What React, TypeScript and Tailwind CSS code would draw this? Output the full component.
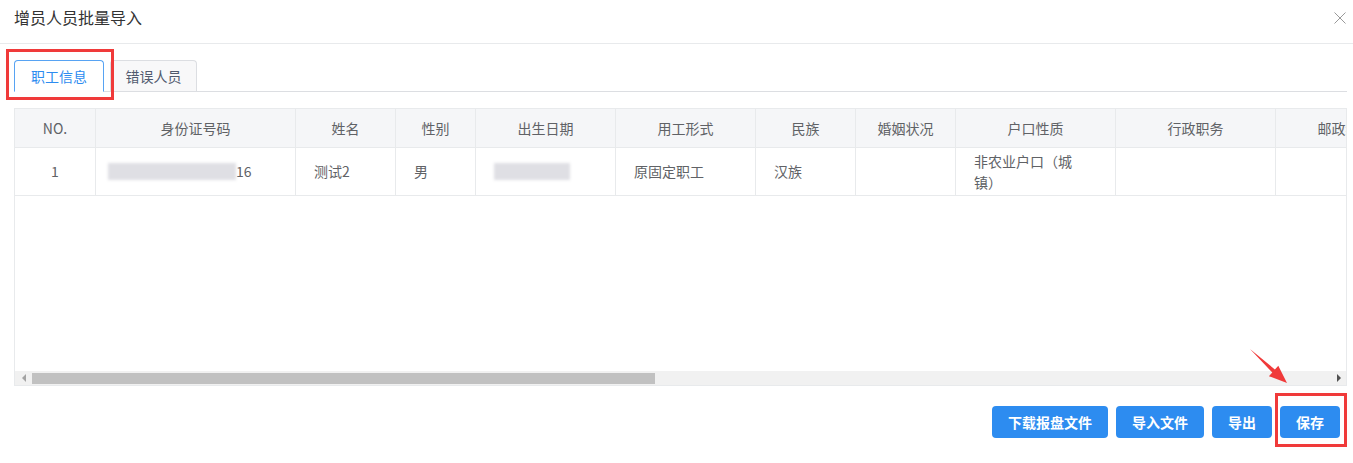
const cols = [
  { key: 'no', title: 'NO.', w: 81 },
  { key: 'idcard', title: '身份证号码', w: 200 },
  { key: 'name', title: '姓名', w: 100 },
  { key: 'sex', title: '性别', w: 80 },
  { key: 'birth', title: '出生日期', w: 140 },
  { key: 'form', title: '用工形式', w: 140 },
  { key: 'nation', title: '民族', w: 100 },
  { key: 'marry', title: '婚姻状况', w: 100 },
  { key: 'hukou', title: '户口性质', w: 160 },
  { key: 'duty', title: '行政职务', w: 160 },
  { key: 'post', title: '邮政编码', w: 140 },
];

function Blur({ w }: { w: number }) {
  return (
    <span
      className="inline-block h-[17px] bg-[#dfdfe4] blur-[1.5px] align-middle"
      style={{ width: w }}
    />
  );
}

function cellContent(key: string) {
  switch (key) {
    case 'no':
      return <div className="w-full text-center">1</div>;
    case 'idcard':
      return (
        <div className="flex items-center ml-[-6px]">
          <Blur w={128} />
          <span>16</span>
        </div>
      );
    case 'name':
      return '测试2';
    case 'sex':
      return '男';
    case 'birth':
      return <Blur w={76} />;
    case 'form':
      return '原固定职工';
    case 'nation':
      return '汉族';
    case 'hukou':
      return <div className="w-[104px] leading-[21px]">非农业户口（城镇）</div>;
    default:
      return '';
  }
}

export default function App() {
  return (
    <div
      className="relative w-[1353px] h-[463px] bg-white overflow-hidden text-[#333]"
      style={{ fontFamily: "'Noto Sans CJK SC', 'Liberation Sans', sans-serif" }}
    >
      {/* Header */}
      <div className="h-[44px] border-b border-[#e8eaec] flex items-start justify-between pl-[14px] pr-[7px] pt-[6px]">
        <span className="text-[16px] leading-[22px] text-[#333]">增员人员批量导入</span>
        <svg width="12" height="12" viewBox="0 0 12 12" className="mt-[6px]">
          <path d="M0.5 0.5 L11.5 11.5 M11.5 0.5 L0.5 11.5" stroke="#999" strokeWidth="1" fill="none" />
        </svg>
      </div>

      <div className="pl-[14px] pr-[6px]">
        {/* Tabs */}
        <div className="mt-[16px] flex items-end border-b border-[#dcdee2] h-[32px]">
          <div className="w-[90px] h-[32px] mb-[-1px] flex items-center justify-center border border-[#57a3f3] border-b-white bg-white rounded-t-[4px] text-[14px] text-[#2d8cf0]">
            职工信息
          </div>
          <div className="ml-[6px] w-[87px] h-[31px] flex items-center justify-center border border-b-0 border-[#dcdee2] bg-[#f8f8f9] rounded-t-[4px] text-[14px] text-[#515a6e]">
            错误人员
          </div>
        </div>

        {/* Table */}
        <div className="mt-[16px] h-[278px] border border-[#e8eaec] flex flex-col overflow-hidden text-[14px]">
          <div className="flex-1 overflow-hidden">
            <div className="flex h-[39px] bg-[#f5f6f8] border-b border-[#e8eaec]">
              {cols.map((c) => (
                <div
                  key={c.key}
                  className="shrink-0 flex items-center justify-center border-r border-[#e8eaec] text-[#606266] whitespace-nowrap"
                  style={{ width: c.w }}
                >
                  {c.title}
                </div>
              ))}
            </div>
            <div className="flex h-[48px] border-b border-[#e8eaec]">
              {cols.map((c) => (
                <div
                  key={c.key}
                  className="shrink-0 flex items-center px-[18px] border-r border-[#e8eaec] text-[#606266]"
                  style={{ width: c.w }}
                >
                  {cellContent(c.key)}
                </div>
              ))}
            </div>
          </div>

          {/* horizontal scrollbar */}
          <div className="h-[14px] bg-[#f1f1f1] flex items-center shrink-0">
            <div className="w-[17px] h-full flex items-center justify-center">
              <span className="w-0 h-0 border-y-[4px] border-y-transparent border-r-[4px] border-r-[#a3a3a3]" />
            </div>
            <div className="w-[623px] h-[11px] bg-[#c1c1c1]" />
            <div className="flex-1" />
            <div className="w-[15px] h-full flex items-center justify-center">
              <span className="w-0 h-0 border-y-[4px] border-y-transparent border-l-[4px] border-l-[#505050]" />
            </div>
          </div>
        </div>

        {/* Footer buttons */}
        <div className="mt-[20px] flex justify-end gap-[8px] pr-[7px]">
          {['下载报盘文件', '导入文件', '导出', '保存'].map((t) => (
            <button
              key={t}
              className="h-[32px] px-[16px] rounded-[4px] bg-[#2d8cf0] text-white text-[14px] font-bold leading-none"
            >
              {t}
            </button>
          ))}
        </div>
      </div>

      {/* Annotations */}
      <div className="absolute left-[6px] top-[49px] w-[108px] h-[51px] border-[3px] border-[#f03a3a]" />
      <div className="absolute left-[1275px] top-[393px] w-[72px] h-[54px] border-[3px] border-[#f03a3a]" />
      <svg className="absolute left-[1240px] top-[340px]" width="60" height="50" viewBox="0 0 60 50">
        <polygon
          points="10,9 34.9,29.5 38.3,25.8 47,43 28.9,36.2 32.3,32.5"
          fill="#f03a3a"
        />
      </svg>
    </div>
  );
}
